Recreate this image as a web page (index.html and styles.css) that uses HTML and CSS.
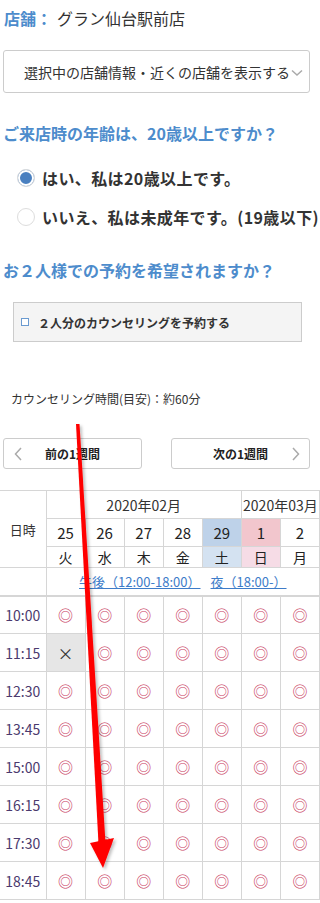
FILE: index.html
```html
<!DOCTYPE html>
<html lang="ja">
<head>
    <meta charset="UTF-8">
    <meta name="viewport" content="width=device-width, initial-scale=1.0">
    <title>予約</title>
    <link rel="stylesheet" href="styles.css">
</head>
<body>
    <div class="page">
        <div class="inner">
            <p class="shop"><span class="shop-label">店舗：</span>グラン仙台駅前店</p>
            <div class="dropdown">
                <span>選択中の店舗情報・近くの店舗を表示する</span>
                <svg class="chev" width="12" height="8" viewBox="0 0 12 8"><polyline points="1,1.5 6,6 11,1.5" fill="none" stroke="#aaa" stroke-width="1.5"/></svg>
            </div>

            <h2 class="question q1">ご来店時の年齢は、20歳以上ですか？</h2>
            <div class="radios">
                <label class="radio"><span class="dot checked"></span>はい、私は20歳以上です。</label>
                <label class="radio"><span class="dot"></span>いいえ、私は未成年です。(19歳以下)</label>
            </div>

            <h2 class="question q2">お２人様での予約を希望されますか？</h2>
            <div class="pair-box"><span class="box-mark"></span>２人分のカウンセリングを予約する</div>

            <p class="duration">カウンセリング時間(目安)：約60分</p>

            <div class="week-nav">
                <button class="week-btn">
                    <svg class="nav-chev left" width="8" height="14" viewBox="0 0 8 14"><polyline points="7,1 1.5,7 7,13" fill="none" stroke="#aaa" stroke-width="1.5"/></svg>
                    前の1週間
                </button>
                <button class="week-btn">
                    次の1週間
                    <svg class="nav-chev right" width="8" height="14" viewBox="0 0 8 14"><polyline points="1,1 6.5,7 1,13" fill="none" stroke="#aaa" stroke-width="1.5"/></svg>
                </button>
            </div>
        </div>

        <table class="schedule">
            <colgroup>
                <col class="c-time">
                <col><col><col><col><col><col><col>
            </colgroup>
            <tr class="r-month">
                <th rowspan="3" class="head-label">日時</th>
                <th colspan="5">2020年02月</th>
                <th colspan="2" class="nowrap">2020年03月</th>
            </tr>
            <tr class="r-day">
                <th>25</th><th>26</th><th>27</th><th>28</th>
                <th class="sat">29</th><th class="sun">1</th><th>2</th>
            </tr>
            <tr class="r-week">
                <th>火</th><th>水</th><th>木</th><th>金</th>
                <th class="sat-l">土</th><th class="sun-l">日</th><th>月</th>
            </tr>
            <tr class="r-links">
                <td></td>
                <td colspan="7"><a href="#">午後（12:00-18:00）</a><a href="#" class="night">夜（18:00-）</a></td>
            </tr>
            <tbody id="slots"></tbody>
        </table>

        <svg class="arrow" width="320" height="903" viewBox="0 0 320 903">
            <defs>
                <filter id="sh" x="-50%" y="-5%" width="200%" height="110%">
                    <feDropShadow dx="2" dy="2" stdDeviation="1.5" flood-color="#000" flood-opacity="0.25"/>
                </filter>
            </defs>
            <g filter="url(#sh)" fill="#ff0000">
                <polygon points="76,424 79.5,424 105.5,843 98.5,843.5"/>
                <polygon points="90,843 114,838 103,868"/>
            </g>
        </svg>
    </div>

    <script>
        const times = ['10:00', '11:15', '12:30', '13:45', '15:00', '16:15', '17:30', '18:45'];
        const slots = document.getElementById('slots');

        times.forEach((t, i) => {
            let row = `<tr class="r-slot${i === 0 ? ' first' : ''}"><td class="time">${t}</td>`;
            for (let d = 0; d < 7; d++) {
                if (i === 1 && d === 0) {
                    row += '<td class="full">×</td>';
                } else {
                    row += '<td class="ok">◎</td>';
                }
            }
            row += '</tr>';
            slots.innerHTML += row;
        });
    </script>
</body>
</html>
```

FILE: styles.css
```css
* {
    margin: 0;
    padding: 0;
    box-sizing: border-box;
}

body {
    font-family: 'Noto Sans CJK JP', 'Noto Sans', sans-serif;
    background: #fff;
    color: #333;
    width: 320px;
    overflow: hidden;
}

.page {
    position: relative;
    width: 320px;
    height: 903px;
    overflow: hidden;
}

.inner {
    padding: 0 3px;
}

.shop {
    margin-top: 6px;
    font-size: 16px;
    line-height: 24px;
    color: #333;
    padding-left: 1px;
}

.shop-label {
    color: #4d8ccc;
    font-weight: bold;
    margin-right: 5px;
}

.dropdown {
    margin-top: 20px;
    width: 307px;
    height: 43px;
    border: 1px solid #ccc;
    border-radius: 3px;
    display: flex;
    align-items: center;
    padding-left: 20px;
    font-size: 14px;
    color: #333;
    white-space: nowrap;
}

.chev {
    margin-left: 1px;
    margin-top: 2px;
}

.question {
    font-size: 16px;
    line-height: 24px;
    color: #4d8ccc;
    font-weight: bold;
    white-space: nowrap;
}

.q1 {
    margin-top: 28px;
}

.radios {
    margin-top: 21px;
    display: flex;
    flex-direction: column;
    gap: 15px;
}

.radio {
    display: flex;
    align-items: center;
    font-size: 16px;
    letter-spacing: 0.4px;
    line-height: 24px;
    font-weight: bold;
    color: #333;
    padding-left: 14px;
    white-space: nowrap;
}

.dot {
    width: 18px;
    height: 18px;
    border-radius: 50%;
    border: 1px solid #ddd;
    background: #fff;
    margin-right: 7px;
    flex-shrink: 0;
}

.dot.checked {
    background: #4a80c0;
    box-shadow: inset 0 0 0 2px #fff;
}

.q2 {
    margin-top: 29px;
}

.pair-box {
    margin: 20px 0 0 10px;
    width: 289px;
    height: 40px;
    background: #f4f4f4;
    border: 1px solid #ccc;
    display: flex;
    align-items: center;
    padding-left: 7px;
    font-size: 12px;
    font-weight: bold;
    color: #333;
}

.box-mark {
    width: 8px;
    height: 8px;
    border: 1px solid #6a9ad0;
    background: #fff;
    margin-right: 9px;
}

.duration {
    margin: 48px 0 0 8px;
    font-size: 12px;
    line-height: 18px;
    color: #333;
}

.week-nav {
    margin-top: 30px;
    display: flex;
    justify-content: space-between;
    width: 307px;
}

.week-btn {
    position: relative;
    width: 139px;
    height: 31px;
    background: #fff;
    border: 1px solid #ccc;
    border-radius: 3px;
    font-family: inherit;
    font-size: 12px;
    font-weight: bold;
    color: #222;
}

.nav-chev {
    position: absolute;
    top: 8px;
}

.nav-chev.left {
    left: 10px;
}

.nav-chev.right {
    right: 9px;
}

.schedule {
    margin-top: 21px;
    width: 320px;
    border-collapse: collapse;
    table-layout: fixed;
    font-size: 13px;
    color: #333;
}

.schedule col {
    width: 39px;
}

.schedule col.c-time {
    width: 46px;
}

.schedule th,
.schedule td {
    border: 1px solid #d6d6d6;
    text-align: center;
    font-weight: normal;
    padding: 0;
}

.schedule tr > :first-child {
    border-left: none;
}

.r-month th {
    height: 28px;
    font-size: 14px;
}

.head-label {
    font-size: 13px !important;
}

.nowrap {
    white-space: nowrap;
    overflow: visible;
}

.r-day th {
    height: 28px;
    font-size: 15px;
    color: #222;
}

.r-week th {
    height: 20px;
    font-size: 14px;
    color: #222;
}

.sat {
    background: #bed2e9;
}

.sun {
    background: #f2c6cd;
}

.sat-l {
    background: #d4e2f1;
}

.sun-l {
    background: #f6dce6;
}

.r-links td {
    height: 28px;
    white-space: nowrap;
}

.r-links a {
    color: #3d7cc9;
    text-decoration: underline;
    font-size: 13px;
}

.r-links a.night {
    margin-left: 10px;
}

.r-slot td {
    height: 38px;
}

.r-slot.first td {
    border-top: 2px solid #d6d6d6;
}

.time {
    color: #4b3a6e;
    font-size: 14px;
}

.ok {
    color: #c83a60;
    font-size: 15px;
    font-weight: bold;
}

.full {
    background: #e6e6e6;
    color: #333;
    font-size: 16px;
}

.arrow {
    position: absolute;
    left: 0;
    top: 0;
    pointer-events: none;
}
```
